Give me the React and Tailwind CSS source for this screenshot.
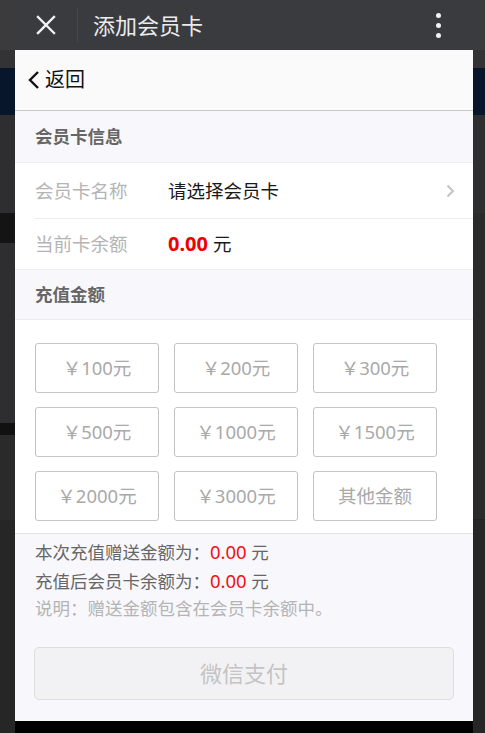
import React from 'react'

const amounts = ['￥100元', '￥200元', '￥300元', '￥500元', '￥1000元', '￥1500元', '￥2000元', '￥3000元', '其他金额']

function SideStrip({ side }) {
    return (
        <div className="flex flex-col w-full h-full bg-[#2b2b2b]">
            <div className="h-[50px] bg-[#3b3b3d]"></div>
            <div className="h-[18px] bg-[#333335]"></div>
            <div className="h-[47px] bg-[#08162b]"></div>
            <div className="h-[98px] bg-[#2e2e30]"></div>
            {side === 'left' ? (
                <>
                    <div className="h-[30px] bg-[#141414]"></div>
                    <div className="h-[180px] bg-[#2e2e30]"></div>
                    <div className="h-[12px] bg-[#111]"></div>
                    <div className="h-[85px] bg-[#2a2a2a]"></div>
                </>
            ) : (
                <div className="h-[307px] bg-[#2a2a2a] border-b border-[#222]"></div>
            )}
            <div className="flex-1 bg-[#262626]"></div>
        </div>
    )
}

export default function App() {
    return (
        <div className="flex w-[485px] h-[733px] overflow-hidden bg-[#2b2b2b]" style={{ fontFamily: '"Noto Sans", "Noto Sans CJK SC", sans-serif' }}>
            <div className="w-[15px] shrink-0"><SideStrip side="left" /></div>

            <div className="w-[458px] shrink-0 flex flex-col">
                {/* top bar */}
                <div className="h-[50px] bg-[#3a3b3f] flex items-center">
                    <div className="w-[62px] h-full flex items-center justify-center">
                        <svg width="20" height="20" viewBox="0 0 20 20" stroke="#f2f2f2" strokeWidth="2.4" strokeLinecap="square">
                            <path d="M2 2L18 18M18 2L2 18" />
                        </svg>
                    </div>
                    <div className="w-px h-[34px] bg-[#46474b]"></div>
                    <div className="ml-[15px] text-[22px] text-[#ececec]">添加会员卡</div>
                    <div className="ml-auto mr-[32px] flex flex-col gap-[5px]">
                        <span className="w-[5px] h-[5px] rounded-full bg-[#f2f2f2]"></span>
                        <span className="w-[5px] h-[5px] rounded-full bg-[#f2f2f2]"></span>
                        <span className="w-[5px] h-[5px] rounded-full bg-[#f2f2f2]"></span>
                    </div>
                </div>

                {/* back bar */}
                <div className="h-[61px] bg-[#fafafa] border-b border-[#c8c8c8] flex items-center pl-[12px]">
                    <svg width="14" height="20" viewBox="0 0 14 20" fill="none" stroke="#111" strokeWidth="2.4">
                        <path d="M11 2L3 10L11 18" />
                    </svg>
                    <span className="ml-[4px] text-[20px] text-[#111]">返回</span>
                </div>

                <div className="flex-1 flex flex-col bg-[#f8f8fc]">
                    <div className="h-[51px] flex items-center pl-[20px] text-[17.5px] font-bold text-[#666]">会员卡信息</div>

                    <div className="bg-white border-t border-[#eeeeee]">
                        <div className="h-[56px] ml-[20px] flex items-center border-b border-[#ececec]">
                            <span className="w-[133px] text-[18.5px] text-[#b4b4b4]">会员卡名称</span>
                            <span className="text-[18.5px] text-[#1a1a1a]">请选择会员卡</span>
                            <svg className="ml-auto mr-[18px]" width="9" height="14" viewBox="0 0 9 14" fill="none" stroke="#c4c4c4" strokeWidth="2">
                                <path d="M1.5 1.5L7 7L1.5 12.5" />
                            </svg>
                        </div>
                        <div className="h-[50px] ml-[20px] flex items-center">
                            <span className="w-[133px] text-[18.5px] text-[#b4b4b4]">当前卡余额</span>
                            <span className="text-[20px] font-bold text-[#f10000]">0.00</span>
                            <span className="ml-[5px] text-[18.5px] text-[#1a1a1a]">元</span>
                        </div>
                    </div>

                    <div className="h-[50px] flex items-center pl-[20px] text-[17.5px] font-bold text-[#666] border-t border-[#eeeeee]">充值金额</div>

                    <div className="bg-white border-t border-[#ececec] border-b border-b-[#e2e2e2] pt-[23px] pb-[12px] pl-[20px]">
                        <div className="grid grid-cols-[124px_124px_124px] gap-x-[15px] gap-y-[14px]">
                            {amounts.map(a => (
                                <div key={a} className="h-[50px] border border-[#c4c4c4] rounded-[3px] flex items-center justify-center text-[18.5px] text-[#a9a9a9]">
                                    {a}
                                </div>
                            ))}
                        </div>
                    </div>

                    <div className="pl-[20px] pt-[4px] text-[17.5px] leading-[27.5px]">
                        <div className="text-[#666]">本次充值赠送金额为：<span className="text-[18.5px] text-[#f01010]">0.00</span> 元</div>
                        <div className="text-[#666]">充值后会员卡余额为：<span className="text-[18.5px] text-[#f01010]">0.00</span> 元</div>
                        <div className="text-[#b4b4b4]">说明：赠送金额包含在会员卡余额中。</div>
                    </div>

                    <div className="mx-[19px] mt-[24px] h-[53px] rounded-[5px] border border-[#dedede] bg-[#f2f2f4] flex items-center justify-center text-[22px] text-[#c4c4c4]">
                        微信支付
                    </div>
                    <div className="flex-1"></div>
                </div>

                <div className="h-[12px] bg-black shrink-0"></div>
            </div>

            <div className="w-[12px] shrink-0"><SideStrip side="right" /></div>
        </div>
    )
}
